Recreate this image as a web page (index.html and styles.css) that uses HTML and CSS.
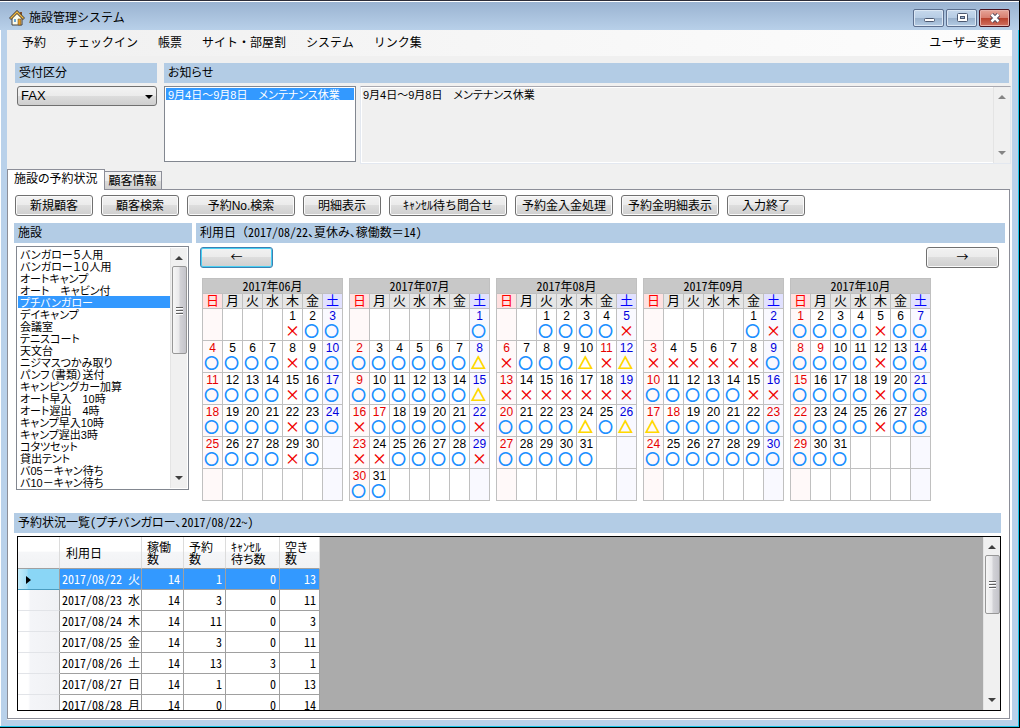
FILE: index.html
```
<!DOCTYPE html>
<html lang="ja">
<head>
<meta charset="utf-8">
<title>施設管理システム</title>
<link rel="stylesheet" href="styles.css">
</head>
<body>
<div class="window">
  <header class="titlebar">
    <svg class="app-icon" width="16" height="16" viewBox="0 0 16 16" aria-hidden="true">
      <path d="M11 2h2v4h-2z" fill="#7a4a2a"/>
      <path d="M3 8l5-5 5 5v7H3z" fill="#fdfbea" stroke="#44403c"/>
      <path d="M1 9l7-7 7 7" fill="none" stroke="#4a4038" stroke-width="3"/>
      <path d="M1.500 8.500l6.500-6.500 6.500 6.500" fill="none" stroke="#f0b840" stroke-width="1.300"/>
      <path d="M9 9h3v6H9z" fill="#e09a28" stroke="#6a5030" stroke-width=".6"/>
      <path d="M5 9h2v3H5z" fill="#6aa8d8"/>
    </svg>
    <h1 class="title">施設管理システム</h1>
    <div class="window-buttons">
      <button class="wbtn" aria-label="最小化"><svg width="14" height="12" viewBox="0 0 14 12"><rect x="2.500" y="6.500" width="10" height="3" rx="1" fill="#fff" stroke="#4b5870"/></svg></button>
      <button class="wbtn" aria-label="最大化"><svg width="14" height="12" viewBox="0 0 14 12"><rect x="2.500" y="1.500" width="10" height="8" rx="1" fill="#fff" stroke="#4b5870"/><rect x="5.500" y="4.500" width="4" height="2" fill="#9db4d2" stroke="#4b5870"/></svg></button>
      <button class="wbtn wbtn-close" aria-label="閉じる"><svg width="14" height="12" viewBox="0 0 14 12"><path d="M3.500 2.500l7 7M10.500 2.500l-7 7" stroke="#4b4458" stroke-width="4.500"/><path d="M3.500 2.500l7 7M10.500 2.500l-7 7" stroke="#fff" stroke-width="2.500"/></svg></button>
    </div>
  </header>

  <div class="client">
    <nav class="menubar">
      <button>予約</button><button>チェックイン</button><button>帳票</button><button>サイト・部屋割</button><button>システム</button><button>リンク集</button>
      <button class="menu-user">ユーザー変更</button>
    </nav>

    <section class="top">
      <div class="reception">
        <label class="bar" for="reception">受付区分</label>
        <div class="combo">
          <select id="reception"><option>FAX</option></select>
          <svg class="combo-arrow" width="8" height="4" viewBox="0 0 8 4" aria-hidden="true"><path d="M0 0h8L4 4z"/></svg>
        </div>
      </div>
      <div class="news">
        <label class="bar" for="news">お知らせ</label>
        <div class="news-body">
          <select id="news" class="listbox news-list" size="5"><option selected>9月4日～9月8日　メンテナンス休業</option></select>
          <div class="news-detail">
            <textarea readonly aria-label="お知らせ内容">9月4日～9月8日　メンテナンス休業</textarea>
            <div class="scroll scroll-off" aria-hidden="true">
              <svg width="8" height="4" viewBox="0 0 8 4"><path d="M0 4h8L4 0z"/></svg>
              <svg width="8" height="4" viewBox="0 0 8 4"><path d="M0 0h8L4 4z"/></svg>
            </div>
          </div>
        </div>
      </div>
    </section>

    <div class="tabs" role="tablist">
      <button class="tab tab-active" role="tab" aria-selected="true">施設の予約状況</button><button class="tab" role="tab" aria-selected="false">顧客情報</button>
    </div>

    <main class="page">
      <div class="actions">
        <button class="btn w78">新規顧客</button>
        <button class="btn w78">顧客検索</button>
        <button class="btn w108">予約No.検索</button>
        <button class="btn w78">明細表示</button>
        <button class="btn w118">ｷｬﾝｾﾙ待ち問合せ</button>
        <button class="btn w98">予約金入金処理</button>
        <button class="btn w98">予約金明細表示</button>
        <button class="btn w78">入力終了</button>
      </div>

      <div class="middle">
        <section class="facility">
          <label class="bar" for="facility">施設</label>
          <div class="facility-box">
            <select id="facility" class="listbox" size="20">
              <option>バンガロー５人用</option>
              <option>バンガロー１０人用</option>
              <option>オートキャンプ</option>
              <option>オート　キャビン付</option>
              <option selected>プチバンガロー</option>
              <option>デイキャンプ</option>
              <option>会議室</option>
              <option>テニスコート</option>
              <option>天文台</option>
              <option>ニジマスつかみ取り</option>
              <option>パンフ（書類）送付</option>
              <option>キャンピングカー加算</option>
              <option>オート早入　10時</option>
              <option>オート遅出　4時</option>
              <option>キャンプ早入10時</option>
              <option>キャンプ遅出3時</option>
              <option>コタツセット</option>
              <option>貸出テント</option>
              <option>バ05－キャン待ち</option>
              <option>バ10－キャン待ち</option>
            </select>
            <div class="scroll" aria-hidden="true">
              <svg width="8" height="4" viewBox="0 0 8 4"><path d="M0 4h8L4 0z"/></svg>
              <div class="thumb thumb-tall"><i></i><i></i><i></i></div>
              <svg width="8" height="4" viewBox="0 0 8 4"><path d="M0 0h8L4 4z"/></svg>
            </div>
          </div>
        </section>

        <section class="usage">
          <h2 class="bar half">利用日<span class="wide">（</span>2017/08/22、夏休み、稼働数<span class="wide">＝</span>14）</h2>
          <div class="pager">
            <button class="btn w73 btn-focus" aria-label="前の月">←</button>
            <button class="btn w73" aria-label="次の月">→</button>
          </div>
          <div class="calendars" id="calendars"></div>
        </section>
      </div>

      <section class="status">
        <h2 class="bar half">予約状況一覧（プチバンガロー、2017/08/22～）</h2>
        <div class="grid-box">
          <div class="grid-area">
            <table class="grid half">
              <thead><tr><th class="c-head"></th><th class="c-date">利用日</th><th class="c-num">稼働<br>数</th><th class="c-num">予約<br>数</th><th class="c-wait">ｷｬﾝｾﾙ<br>待ち数</th><th class="c-free">空き<br>数</th></tr></thead>
              <tbody>
                <tr class="selected"><th><svg width="5" height="8" viewBox="0 0 5 8"><path d="M0 0l5 4-5 4z"/></svg></th><td>2017/08/22 火</td><td>14</td><td>1</td><td>0</td><td>13</td></tr>
                <tr><th></th><td>2017/08/23 水</td><td>14</td><td>3</td><td>0</td><td>11</td></tr>
                <tr><th></th><td>2017/08/24 木</td><td>14</td><td>11</td><td>0</td><td>3</td></tr>
                <tr><th></th><td>2017/08/25 金</td><td>14</td><td>3</td><td>0</td><td>11</td></tr>
                <tr><th></th><td>2017/08/26 土</td><td>14</td><td>13</td><td>3</td><td>1</td></tr>
                <tr><th></th><td>2017/08/27 日</td><td>14</td><td>1</td><td>0</td><td>13</td></tr>
                <tr><th></th><td>2017/08/28 月</td><td>14</td><td>0</td><td>0</td><td>14</td></tr>
              </tbody>
            </table>
          </div>
          <div class="scroll" aria-hidden="true">
            <svg width="8" height="4" viewBox="0 0 8 4"><path d="M0 4h8L4 0z"/></svg>
            <div class="thumb"><i></i><i></i><i></i></div>
            <svg width="8" height="4" viewBox="0 0 8 4"><path d="M0 0h8L4 4z"/></svg>
          </div>
        </div>
      </section>
    </main>
  </div>
</div>
<script src="app.js"></script>
</body>
</html>
```

FILE: styles.css
```
* { box-sizing: border-box; }

body {
  margin: 0;
  font-family: "Liberation Sans", "Noto Sans CJK JP", sans-serif;
  font-size: 12px;
  line-height: 14px;
  color: #000;
}

button, select, textarea { font: inherit; color: inherit; margin: 0; }

h1, h2 { margin: 0; font-size: 12px; font-weight: normal; }

.window {
  display: flex;
  flex-direction: column;
  height: 100vh;
  min-height: 600px;
  padding: 0 7px 7px;
  background: #b9d1ea;
  border-top: 1px solid #2c2c38;
  border-right: 1px solid #000;
  border-bottom: 1px solid #000;
  box-shadow: inset -1px -1px 0 #1cc4e8, inset 1px 1px 0 #fff;
  overflow: hidden;
}

/* title bar */
.titlebar {
  display: flex;
  align-items: center;
  height: 29px;
  flex: none;
  margin: 0 -7px;
  padding: 4px 9px 0 9px;
  border-top: 1px solid #fff;
  background: linear-gradient(#9ab3d1, #b8d0e9);
}
.app-icon { margin-right: 4px; }
.title { flex: 1; line-height: 18px; }
.window-buttons { display: flex; gap: 2px; }
.wbtn {
  display: flex;
  align-items: center;
  justify-content: center;
  width: 31px;
  height: 18px;
  padding: 0;
  border: 1px solid #5c6f8e;
  border-radius: 2px;
  background: linear-gradient(#c6d8ec 0, #b6cce4 48%, #98b0cb 50%, #b4cce4 100%);
  box-shadow: inset 0 0 0 1px #dbe7f4;
}
.wbtn-close {
  border-color: #4a1420;
  background: linear-gradient(#e6a598 0, #d87f70 48%, #b8412c 50%, #d07060 100%);
  box-shadow: inset 0 0 0 1px #e8b0a8;
}

.client {
  display: flex;
  flex-direction: column;
  flex: 1;
  min-height: 0;
  background: #f0f0f0;
}

.menubar {
  display: flex;
  align-items: center;
  gap: 20px;
  flex: none;
  height: 26px;
  padding: 0 11px 0 15px;
  background: linear-gradient(90deg, #f0f0f0, #fdfdfd);
}
.menubar button { padding: 0; border: 0; background: none; line-height: 16px; }
.menubar .menu-user { margin-left: auto; }

/* blue captions */
.bar {
  display: block;
  height: 20px;
  padding: 0 4px;
  line-height: 20px;
  background: #b3cce5;
  font-feature-settings: "palt";
}
.half {
  font-family: "Noto Sans CJK JP", sans-serif;
  font-feature-settings: "hwid", "palt";
}
.bar.half { line-height: 18px; }
.wide { font-feature-settings: normal; }

/* top section */
.top { display: flex; gap: 7px; flex: none; padding: 7px 1px 5px 8px; }
.reception { width: 142px; }
.news { flex: 1; min-width: 0; }
.news > .bar { margin-right: 2px; }
.combo { display: flex; position: relative; margin: 3px 0 0 2px; }
.combo select {
  flex: 1;
  height: 20px;
  padding: 0 3px;
  appearance: none;
  border: 1px solid #707070;
  border-radius: 3px;
  background: linear-gradient(#f3f3f3 0, #ebebeb 50%, #dcdcdc 50%, #cfcfcf 100%);
  font-size: 13px;
}
.combo-arrow { position: absolute; right: 4px; top: 9px; pointer-events: none; }
.news-body { display: flex; gap: 4px; margin-top: 3px; }

.listbox {
  display: block;
  padding: 1px;
  border: 1px solid #828790;
  border-radius: 0;
  outline: 0;
  background: #fff;
  overflow: hidden;
  scrollbar-width: none;
  font-size: 11px;
  font-feature-settings: "palt";
}
.listbox option {
  display: flex;
  align-items: center;
  height: 12px;
  min-height: 0;
  padding: 0 2px;
  line-height: 12px;
  overflow: visible;
}
.listbox option:checked {
  background: linear-gradient(#39f, #39f);
  -webkit-text-fill-color: #fff;
}
.news-list { width: 192px; height: 76px; }

.news-detail {
  display: flex;
  flex: 1;
  min-width: 0;
  height: 78px;
  border: 1px solid #e3e8f0;
  border-top-color: #a8a8b0;
  box-shadow: inset 0 0 0 1px #fff;
}
.news-detail textarea {
  flex: 1;
  min-width: 0;
  padding: 1px 2px;
  border: 0;
  outline: 0;
  resize: none;
  background: none;
  overflow: hidden;
  font-size: 11px;
  font-feature-settings: "palt";
}

/* scroll bars */
.scroll {
  display: flex;
  flex-direction: column;
  align-items: center;
  flex: none;
  width: 17px;
  padding: 8px 0;
  background: #f0f0f0;
  border-left: 1px solid #e4e4e4;
}
.scroll svg { flex: none; fill: #404040; }
.scroll svg:last-child { margin-top: auto; }
.scroll-off svg { fill: #858585; }
.thumb {
  display: flex;
  flex-direction: column;
  align-items: center;
  justify-content: center;
  gap: 2px;
  width: 15px;
  height: 59px;
  margin-top: 6px;
  border: 1px solid #979797;
  border-radius: 2px;
  background: linear-gradient(90deg, #f6f6f6 0, #e9e9eb 45%, #d2d2d6 55%, #c4c4ca 100%);
}
.thumb-tall { height: 88px; }
.thumb i { width: 7px; height: 1px; background: #606060; box-shadow: 0 1px 0 #fff; }

/* tabs */
.tabs { display: flex; align-items: flex-end; flex: none; position: relative; z-index: 1; }
.tab {
  height: 18px;
  margin-bottom: 0;
  padding: 0 4px;
  border: 1px solid #8c8e98;
  border-left: 0;
  border-bottom: 0;
  background: linear-gradient(#f2f2f2 0, #ebebeb 50%, #dcdcdc 50%, #d0d0d0 100%);
  font-feature-settings: "palt";
}
.tab-active {
  height: 21px;
  margin-bottom: -1px;
  padding: 0 6px 2px;
  border-left: 1px solid #8c8e98;
  background: #fff;
}

.page {
  display: flex;
  flex-direction: column;
  flex: 1;
  min-height: 0;
  margin: 0 2px 1px 0;
  padding: 5px 4px 7px 6px;
  border: 1px solid #8c8e98;
  background: #fff;
  box-shadow: 2px 1px 0 #fff;
}

.btn {
  height: 21px;
  padding: 0;
  border: 1px solid #707070;
  border-radius: 3px;
  background: linear-gradient(#f2f2f2 0, #ebebeb 48%, #dddddd 50%, #cfcfcf 100%);
  box-shadow: inset 0 0 0 1px #fafafa;
  line-height: 16px;
  white-space: nowrap;
}
.btn-focus { border-color: #3c7fb1; box-shadow: inset 0 0 0 1px #48d0f4; }
.w73 { width: 73px; padding-bottom: 2px; font-family: "Noto Sans CJK JP", sans-serif; }
.w78 { width: 78px; }
.w98 { width: 98px; }
.w108 { width: 108px; }
.w118 { width: 118px; }

.actions { display: flex; gap: 8px; flex: none; padding-left: 1px; }

/* facility list and calendars */
.middle { display: flex; gap: 4px; flex: none; margin-top: 7px; }
.facility { width: 178px; }
.facility-box {
  display: flex;
  height: 244px;
  margin: 3px 3px 0 2px;
  padding: 1px;
  border: 1px solid #828790;
}
.facility-box .listbox { flex: 1; min-width: 0; border: 0; padding: 0; }
.usage { flex: 1; min-width: 0; }
.pager { display: flex; justify-content: space-between; margin: 4px 6px 0 4px; }
.calendars { display: flex; gap: 6px; margin: 10px 0 0 6px; }

.calendar {
  border-collapse: collapse;
  table-layout: fixed;
  width: 141px;
}
.calendar th, .calendar td {
  padding: 0;
  border: 1px solid #c0c0c0;
  font-weight: normal;
  text-align: center;
}
.calendar .month {
  height: 15px;
  background: #c8c8c8;
  line-height: 14px;
}
.calendar .weekday {
  height: 15px;
  background: #e6e6e6;
  font-size: 13px;
  line-height: 14px;
}
.calendar td { height: 32px; vertical-align: top; }
.calendar .weekday.sun { background: #ffe1e1; color: #f00; }
.calendar .weekday.sat { background: #e1e1ff; color: #00f; }
.calendar td.sun { background: #fff9f9; color: #e60000; }
.calendar td.sat { background: #f9f9ff; color: #00d; }
.calendar td.holiday { color: #e60000; }
.day { display: block; height: 15px; line-height: 15px; }
.mark {
  display: block;
  height: 14px;
  padding-right: 2px;
  font-family: "Noto Sans CJK JP", sans-serif;
  font-size: 14px;
  line-height: 12px;
  -webkit-text-stroke: 1px currentColor;
}
.mark-open { color: #1e90ff; }
.mark-full { color: #f00000; padding: 0; font-size: 15px; line-height: 12px; -webkit-text-stroke: 0; font-weight: 500; }
.mark-few { color: #ffd800; }

/* reservation grid */
.status { display: flex; flex-direction: column; flex: 1; min-height: 0; margin-top: 12px; }
.status > .bar { flex: none; margin-right: 4px; }
.grid-box {
  display: flex;
  flex: 1;
  min-height: 0;
  margin: 3px 4px 0 3px;
  border: 1px solid #000;
}
.grid-area { flex: 1; min-width: 0; overflow: hidden; background: #ababab; }
.grid {
  border-collapse: separate;
  border-spacing: 0;
  table-layout: fixed;
  width: 302px;
}
.grid th, .grid td {
  height: 21px;
  padding: 0 3px;
  border-right: 1px solid #a0a0a0;
  border-bottom: 1px solid #a0a0a0;
  background: #fff;
  font-weight: normal;
  line-height: 16px;
  text-align: right;
  white-space: nowrap;
}
.grid td:nth-child(2) { padding: 0 2px; text-align: left; }
.grid thead th {
  height: 32px;
  padding: 0 6px;
  border-right-color: #dcdcdc;
  background: linear-gradient(#fff 0, #fff 45%, #f5f6f8 50%, #f1f2f4 100%);
  line-height: 12px;
  text-align: left;
}
.grid tbody th {
  padding: 0 8px;
  border-bottom-color: #e2e4e8;
  background: linear-gradient(90deg, #fff 0, #fff 25%, #f4f5f8 30%, #f0f1f4 100%);
  text-align: left;
}
.grid .c-head { width: 42px; }
.grid .c-date { width: 82px; }
.grid .c-num { width: 42px; padding: 0 5px; }
.grid .c-wait { width: 54px; padding: 0 5px; }
.grid .c-free { width: 40px; padding: 0 5px; }
.grid .selected td { background: #39f; color: #fff; }
.grid .selected th {
  border-bottom-color: #4a9cc0;
  background: linear-gradient(90deg, #c4ecfa 0, #a4def6 22%, #8ad6f6 25%, #8ad6f6 100%);
}
```

FILE: app.js
```
const WEEKDAYS = ["日", "月", "火", "水", "木", "金", "土"];

const MONTHS = [
  { year: 2017, month: 6, full: [1, 8, 15, 22, 29], few: [], holidays: [] },
  { year: 2017, month: 7, full: [16, 22, 23, 24, 29], few: [8, 15], holidays: [17] },
  { year: 2017, month: 8, full: [5, 6, 11, 13, 14, 15, 16, 17, 18, 19], few: [10, 12, 24, 26], holidays: [11] },
  { year: 2017, month: 9, full: [2, 3, 4, 5, 6, 7, 8, 15, 16], few: [17], holidays: [18, 23] },
  { year: 2017, month: 10, full: [5, 12, 19, 26], few: [], holidays: [9] }
];

function dayClass(column) {
  return column === 0 ? "sun" : column === 6 ? "sat" : "";
}

function markHtml(data, day) {
  if (data.full.includes(day)) return '<span class="mark mark-full">×</span>';
  if (data.few.includes(day)) return '<span class="mark mark-few">△</span>';
  return '<span class="mark mark-open">○</span>';
}

function calendarHtml(data) {
  const first = new Date(data.year, data.month - 1, 1).getDay();
  const count = new Date(data.year, data.month, 0).getDate();
  const title = data.year + "年" + String(data.month).padStart(2, "0") + "月";
  let html = '<table class="calendar"><thead><tr><th class="month half" colspan="7">' + title + "</th></tr><tr>";
  WEEKDAYS.forEach((name, i) => {
    html += '<th class="weekday ' + dayClass(i) + '">' + name + "</th>";
  });
  html += "</tr></thead><tbody>";
  for (let week = 0; week < 6; week++) {
    html += "<tr>";
    for (let column = 0; column < 7; column++) {
      const day = week * 7 + column - first + 1;
      const inMonth = day >= 1 && day <= count;
      const holiday = data.holidays.includes(day) ? " holiday" : "";
      html += '<td class="' + dayClass(column) + holiday + '">';
      if (inMonth) html += '<span class="day">' + day + "</span>" + markHtml(data, day);
      html += "</td>";
    }
    html += "</tr>";
  }
  return html + "</tbody></table>";
}

document.getElementById("calendars").innerHTML = MONTHS.map(calendarHtml).join("");
```
